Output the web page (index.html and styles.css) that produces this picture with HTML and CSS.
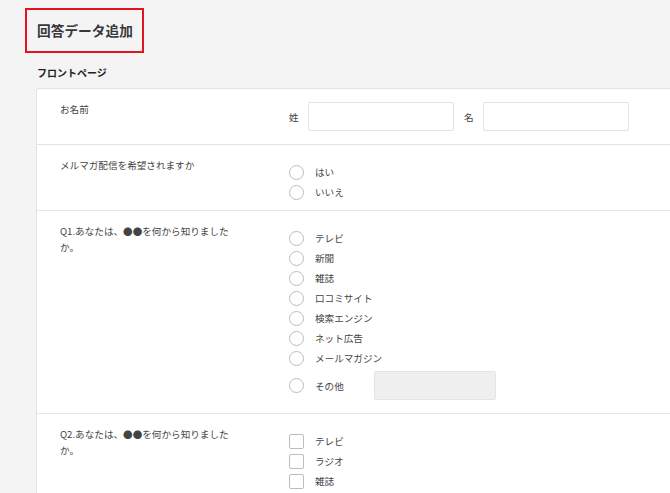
FILE: index.html
```html
<!DOCTYPE html>
<html lang="ja">
<head>
<meta charset="utf-8">
<title>回答データ追加</title>
<link rel="stylesheet" href="styles.css">
</head>
<body>
<div class="page">
  <div class="title-box"><h1 class="title">回答データ追加</h1></div>
  <h2 class="section-title">フロントページ</h2>
  <div class="card">
    <div class="row">
      <div class="label">お名前</div>
      <div class="field field--name">
        <span class="name-label">姓</span>
        <span class="text-input"></span>
        <span class="name-label">名</span>
        <span class="text-input"></span>
      </div>
    </div>
    <div class="row row--short">
      <div class="label">メルマガ配信を希望されますか</div>
      <div class="field">
        <div class="option"><span class="radio"></span><span class="opt-text">はい</span></div>
        <div class="option"><span class="radio"></span><span class="opt-text">いいえ</span></div>
      </div>
    </div>
    <div class="row">
      <div class="label">Q1.あなたは、●●を何から知りましたか。</div>
      <div class="field">
        <div class="option"><span class="radio"></span><span class="opt-text">テレビ</span></div>
        <div class="option"><span class="radio"></span><span class="opt-text">新聞</span></div>
        <div class="option"><span class="radio"></span><span class="opt-text">雑誌</span></div>
        <div class="option"><span class="radio"></span><span class="opt-text">口コミサイト</span></div>
        <div class="option"><span class="radio"></span><span class="opt-text">検索エンジン</span></div>
        <div class="option"><span class="radio"></span><span class="opt-text">ネット広告</span></div>
        <div class="option"><span class="radio"></span><span class="opt-text">メールマガジン</span></div>
        <div class="option option--other"><span class="radio"></span><span class="opt-text opt-text--other">その他</span><span class="other-input"></span></div>
      </div>
    </div>
    <div class="row">
      <div class="label">Q2.あなたは、●●を何から知りましたか。</div>
      <div class="field">
        <div class="option"><span class="checkbox"></span><span class="opt-text">テレビ</span></div>
        <div class="option"><span class="checkbox"></span><span class="opt-text">ラジオ</span></div>
        <div class="option"><span class="checkbox"></span><span class="opt-text">雑誌</span></div>
      </div>
    </div>
  </div>
</div>
</body>
</html>
```

FILE: styles.css
```css
html, body {
  margin: 0;
  padding: 0;
}
body {
  background: #f4f4f4;
  font-family: "Noto Sans CJK JP", "Noto Sans", sans-serif;
  color: #333;
  overflow: hidden;
  height: 493px;
}
.page {
  padding: 8px 0 0 25px;
}
.title-box {
  display: inline-block;
  border: 2px solid #e2141f;
  padding: 0 9px 0 10px;
  height: 41px;
}
.title {
  margin: 0;
  font-size: 13.7px;
  font-weight: bold;
  line-height: 41px;
  color: #383838;
}
.section-title {
  margin: 12px 0 7px 12px;
  font-size: 10px;
  font-weight: bold;
  line-height: 16px;
  color: #222;
}
.card {
  margin-left: 11px;
  background: #fff;
  border: 1px solid #e2e2e2;
  border-right: none;
  border-radius: 3px 0 0 0;
}
.row {
  display: grid;
  grid-template-columns: 229px 1fr;
  padding: 12px 0 13px 23px;
  border-top: 1px solid #e4e4e4;
  font-size: 9.6px;
  line-height: 16px;
  color: #444;
}
.row:first-child {
  border-top: none;
}
.row--short {
  padding-bottom: 8px;
}
.label {
  max-width: 172px;
}
.field {
  padding-top: 5px;
}
.field--name {
  padding-top: 1px;
  display: flex;
  align-items: center;
}
.name-label {
  width: 19px;
}
.text-input {
  display: block;
  width: 144px;
  height: 27px;
  border: 1px solid #e2e2e2;
  border-radius: 2px;
  margin-right: 10px;
  background: #fff;
}
.option {
  display: flex;
  align-items: center;
  height: 20px;
}
.option--other {
  height: 29px;
  margin-top: 3px;
}
.radio {
  box-sizing: border-box;
  width: 15px;
  height: 15px;
  border: 1px solid #bdbdbd;
  border-radius: 50%;
  margin-right: 11px;
  flex: none;
}
.checkbox {
  box-sizing: border-box;
  width: 15px;
  height: 15px;
  border: 1px solid #bdbdbd;
  border-radius: 2px;
  margin-right: 11px;
  flex: none;
}
.opt-text--other {
  width: 59px;
}
.other-input {
  display: block;
  box-sizing: border-box;
  width: 122px;
  height: 29px;
  background: #efefef;
  border: 1px solid #e4e4e4;
  border-radius: 2px;
}
```
